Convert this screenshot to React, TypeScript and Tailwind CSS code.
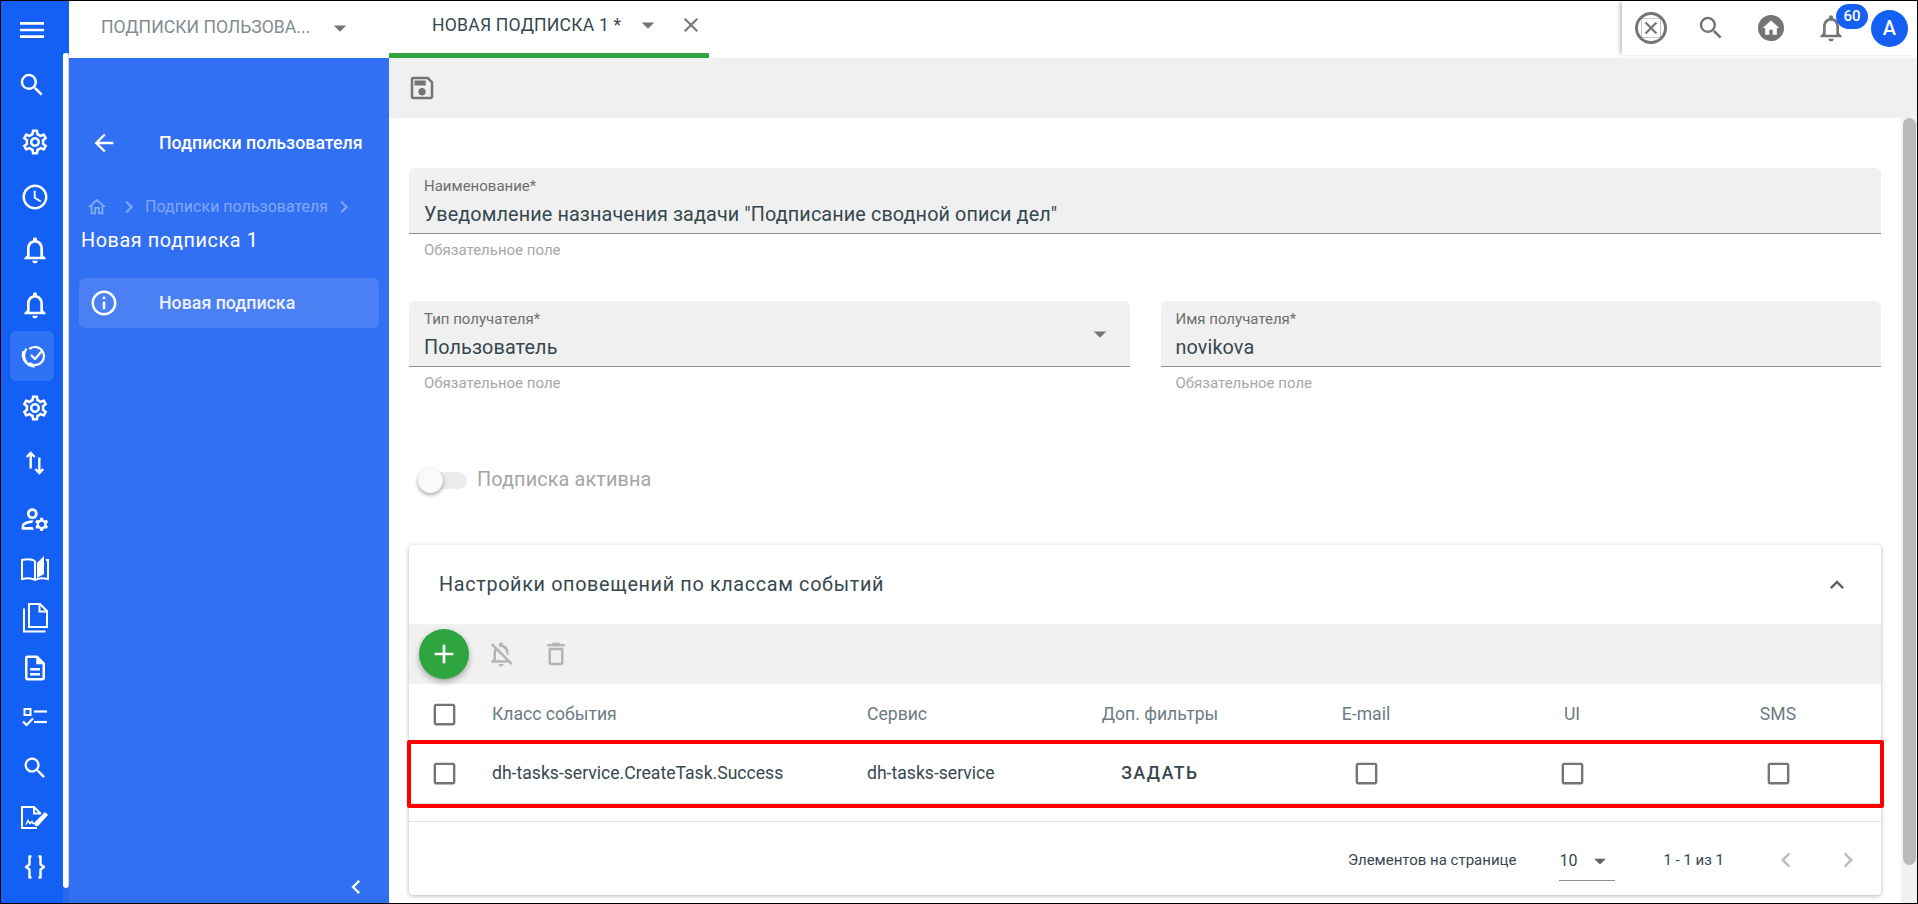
import React from "react";
import {
  MdMenu, MdSearch, MdOutlineSettings, MdAccessTime, MdNotificationsNone, MdOutlineManageAccounts,
  MdOutlineDescription, MdArrowBack, MdOutlineHome, MdChevronRight,
  MdOutlineInfo, MdChevronLeft, MdArrowDropDown, MdClose, MdOutlineSave, MdHome, MdOutlineNotificationsOff,
  MdOutlineDelete, MdAdd, MdExpandLess, MdCheckBoxOutlineBlank,
} from "react-icons/md";

function TargetIcon() {
  return (
    <svg width="30" height="30" viewBox="0 0 30 30" fill="none" stroke="white" strokeWidth="2.200" strokeLinecap="round" strokeLinejoin="round">
      <path d="M11 7.500a9 9 0 1 1 0 15" />
      <path d="M12.500 14.500l3.500 3.500 6.500-7.500" />
      <path d="M7 8.500a11 11 0 0 0 8 17" />
      <path d="M4 11a12 12 0 0 0 6 13" />
    </svg>
  );
}
function ArrowsIcon() {
  return (
    <svg width="24" height="24" viewBox="0 0 24 24" fill="none" stroke="white" strokeWidth="2.400">
      <path d="M7.700 17.500V2M3.700 6l4-4 4 4" />
      <path d="M16.300 6.500V22M12.300 18l4 4 4-4" />
    </svg>
  );
}
function ChecklistIcon() {
  return (
    <svg width="26" height="22" viewBox="0 0 26 22" fill="none" stroke="white" strokeWidth="2.200">
      <rect x="2.500" y="2" width="6" height="6" strokeWidth="2" />
      <path d="M12 4.500H25" />
      <path d="M1 14.500l3.500 3.500 6.500-6.500" />
      <path d="M12 15H25" />
    </svg>
  );
}
function CopyIcon() {
  return (
    <svg width="30" height="32" viewBox="0 0 30 32" fill="none" stroke="white" strokeWidth="2">
      <path d="M9 2h11l7 7v16H9z" />
      <path d="M19.500 2v7.500H27" />
      <path d="M4 6.500V29.500h21.500" />
    </svg>
  );
}
function BookIcon() {
  return (
    <svg width="30" height="28" viewBox="0 0 30 28" fill="none" stroke="white" strokeWidth="2">
      <path d="M15 7C12 5 6 5 2 6V25C6 24 12 24 15 26C18 24 24 24 28 25V6H26" />
      <path d="M15 7V26" />
      <path d="M17 9L24 2V20L17 24Z" fill="white" stroke="none" />
    </svg>
  );
}
function SignIcon() {
  return (
    <svg width="30" height="26" viewBox="0 0 30 26" fill="none" stroke="white" strokeWidth="2">
      <path d="M17 23H2V2h12l7 7" />
      <path d="M14 2v6.500h6" />
      <path d="M6 19.500l2-4 2 3 2-2 1 2h3" strokeWidth="1.500" />
      <path d="M15 21l-.5-3.500L25 7l3 3-10 11z" fill="white" stroke="none" />
    </svg>
  );
}
function BracesIcon() {
  return (
    <svg width="24" height="24" viewBox="0 0 24 24" fill="none" stroke="white" strokeWidth="2.400" strokeLinejoin="round">
      <path d="M8.500 1.500H6.500V9.500L3 12l3.500 2.500V22.500H8.500" />
      <path d="M15.500 1.500h2V9.500L21 12l-3.500 2.500V22.500h-2" />
    </svg>
  );
}

const RAIL = [
  { h: "h-[54px]", x: "", icon: <MdSearch size={30} color="white" /> },
  { h: "h-[60px]", x: "pl-[6px]", icon: <MdOutlineSettings size={30} color="white" /> },
  { h: "h-[50px]", x: "pl-[6px]", icon: <MdAccessTime size={30} color="white" /> },
  { h: "h-[56px]", x: "pl-[6px]", icon: <MdNotificationsNone size={32} color="white" /> },
  { h: "h-[54px]", x: "pl-[6px]", icon: <MdNotificationsNone size={32} color="white" /> },
  { h: "h-[48px]", x: "", active: true, icon: <TargetIcon /> },
  { h: "h-[55px]", x: "pl-[6px]", icon: <MdOutlineSettings size={30} color="white" /> },
  { h: "h-[55px]", x: "pl-[6px]", icon: <ArrowsIcon /> },
  { h: "h-[57px]", x: "pl-[6px]", icon: <MdOutlineManageAccounts size={32} color="white" /> },
  { h: "h-[42px]", x: "pl-[6px]", icon: <BookIcon /> },
  { h: "h-[58px]", x: "pl-[6px]", icon: <CopyIcon /> },
  { h: "h-[42px]", x: "pl-[6px]", icon: <MdOutlineDescription size={30} color="white" /> },
  { h: "h-[58px]", x: "pl-[6px]", icon: <ChecklistIcon /> },
  { h: "h-[42px]", x: "pl-[6px]", icon: <MdSearch size={28} color="white" /> },
  { h: "h-[58px]", x: "pl-[6px]", icon: <SignIcon /> },
  { h: "h-[40px]", x: "pl-[6px]", icon: <BracesIcon /> },
];

function Rail() {
  return (
    <div className="flex w-[68px] shrink-0 bg-[#1460f5]">
      <div className="w-[62px] shrink-0 flex flex-col">
        <div className="h-[57px] shrink-0 flex items-center justify-center">
          <MdMenu size={32} color="white" />
        </div>
        {RAIL.map((r, i) => (
          <div key={i} className={`${r.h} ${r.x} shrink-0 flex items-center justify-center`}>
            {r.active ? (
              <div className="w-[44px] h-[50px] shrink-0 rounded-md bg-[#2f72f6] flex items-center justify-center pl-[4px]">
                {r.icon}
              </div>
            ) : (
              r.icon
            )}
          </div>
        ))}
      </div>
      <div className="w-[6px] shrink-0 flex flex-col">
        <div className="h-[52px] shrink-0" />
        <div className="h-[835px] shrink-0 bg-white border-r border-[#d0d0d0] rounded-t-sm rounded-b-md" />
        <div className="flex-1 bg-[#2a68ea]" />
      </div>
    </div>
  );
}

function SidePanel() {
  return (
    <div className="w-[320px] shrink-0 bg-[#3270f3] flex flex-col text-white relative">
      <div className="h-[73px] shrink-0" />
      <div className="h-[24px] flex items-center shrink-0">
        <div className="w-[90px] pl-[21px] shrink-0"><MdArrowBack size={28} color="white" /></div>
        <span className="text-[17.800px] font-medium leading-none">Подписки пользователя</span>
      </div>
      <div className="mt-[40px] h-[24px] flex items-center shrink-0 pl-[16px] text-[16px] text-white/40">
        <MdOutlineHome size={22} className="ml-[1px]" />
        <MdChevronRight size={24} className="ml-[9px]" />
        <span className="ml-[4px]">Подписки пользователя</span>
        <MdChevronRight size={24} className="ml-[4px]" />
      </div>
      <div className="mt-[10px] pl-[12px] text-[19.800px] leading-[24px] tracking-[0.6px]">Новая подписка 1</div>
      <div className="mt-[25px] mx-[10px] h-[50px] rounded-md bg-[#4b80f5] flex items-center">
        <MdOutlineInfo size={30} className="ml-[10px]" />
        <span className="ml-[40px] text-[17.800px] font-medium text-white/90">Новая подписка</span>
      </div>
      <div className="mt-auto mb-[2px] pr-[19px] flex justify-end"><MdChevronLeft size={28} /></div>
    </div>
  );
}

function TopBar() {
  return (
    <div className="h-[57px] shrink-0 bg-white flex items-stretch">
      <div className="w-[320px] shrink-0 flex items-center pl-[32px] pb-[4px]">
        <span className="text-[17.6px] text-[#828c92] whitespace-nowrap">ПОДПИСКИ ПОЛЬЗОВА...</span>
        <MdArrowDropDown size={30} color="#757575" className="ml-[15px]" />
      </div>
      <div className="w-[320px] shrink-0 flex items-center pl-[43px] pb-[4px] border-b-[5px] border-[#2ea53f]">
        <span className="text-[17.6px] tracking-[0.2px] text-[#37474f] whitespace-nowrap">НОВАЯ ПОДПИСКА 1 *</span>
        <MdArrowDropDown size={30} color="#757575" className="ml-[12px]" />
        <MdClose size={24} color="#757575" className="ml-[16px]" />
      </div>
      <div className="flex-1" />
      <div className="w-[295px] shrink-0 flex items-center relative shadow-[-3px_0_4px_-1px_rgba(0,0,0,0.25)] mb-[3px]">
        <div className="ml-[13px] w-[32px] h-[32px] rounded-full border-[3px] border-[#757575] flex items-center justify-center">
          <MdClose size={20} color="#757575" className="stroke-[#757575] stroke-1" />
        </div>
        <MdSearch size={30} color="#757575" className="ml-[29px]" />
        <div className="ml-[32px] w-[26px] h-[26px] rounded-full bg-[#757575] flex items-center justify-center">
          <MdHome size={20} color="white" />
        </div>
        <MdNotificationsNone size={32} color="#757575" className="ml-[31px]" />
        <div className="absolute left-[214px] top-[3px] w-[32px] h-[25px] rounded-full bg-[#1460f5] text-white text-[15px] font-medium flex items-center justify-center">60</div>
        <div className="ml-[24px] w-[37px] h-[37px] rounded-full bg-[#1460f5] text-white text-[20px] font-medium flex items-center justify-center">A</div>
      </div>
    </div>
  );
}

function Field({ label, value, helper, arrow }: { label: string; value: string; helper: string; arrow?: boolean }) {
  return (
    <div className="flex-1 min-w-0">
      <div className="h-[66px] bg-[#f0f0f0] rounded-t-md border-b border-[#8e8e8e] px-[15px] pt-[9px] relative">
        <div className="text-[15px] leading-[18px] text-[#6e6e6e]">{label}</div>
        <div className="mt-[7px] text-[19.800px] leading-[26px] tracking-[0.12px] text-[#37474f]">{value}</div>
        {arrow && <MdArrowDropDown size={30} color="#757575" className="absolute right-[15px] top-[18px]" />}
      </div>
      <div className="mt-[7px] pl-[15px] text-[15px] leading-[18px] text-[#a4a8aa]">{helper}</div>
    </div>
  );
}

const GRID = "grid grid-cols-[83px_375px_190px_206px_206px_206px_206px] items-center";

function Check() {
  return <MdCheckBoxOutlineBlank size={29} color="#757575" />;
}

function Card() {
  return (
    <div className="mt-[52px] h-[350px] shrink-0 bg-white rounded shadow-[0_1px_4px_rgba(0,0,0,0.3)] flex flex-col relative">
      <div className="h-[79px] shrink-0 flex items-center pl-[30px] pr-[30px]">
        <span className="text-[19.800px] tracking-[0.66px] text-[#37474f]">Настройки оповещений по классам событий</span>
        <MdExpandLess size={28} color="#616161" className="ml-auto" />
      </div>
      <div className="h-[60px] shrink-0 bg-[#f1f1f1] flex items-center pl-[10px]">
        <div className="w-[50px] h-[50px] rounded-full bg-[#2ea53f] shadow-[0_3px_6px_rgba(0,0,0,0.3)] flex items-center justify-center">
          <MdAdd size={32} color="white" />
        </div>
        <MdOutlineNotificationsOff size={30} color="#b5b5b5" className="ml-[17px]" />
        <MdOutlineDelete size={30} color="#b5b5b5" className="ml-[25px]" />
      </div>
      <div className={`${GRID} h-[60px] shrink-0 text-[17.6px] text-[#6d7b83]`}>
        <div className="flex justify-center pr-[13px]"><Check /></div>
        <div>Класс события</div>
        <div>Сервис</div>
        <div className="text-center">Доп. фильтры</div>
        <div className="text-center">E-mail</div>
        <div className="text-center">UI</div>
        <div className="text-center">SMS</div>
      </div>
      <div className={`${GRID} h-[60px] shrink-0 text-[17.6px] text-[#37474f] border-b border-[#e2e2e2]`}>
        <div className="flex justify-center pr-[13px]"><Check /></div>
        <div>dh-tasks-service.CreateTask.Success</div>
        <div>dh-tasks-service</div>
        <div className="text-center font-medium tracking-[1.5px]">ЗАДАТЬ</div>
        <div className="flex justify-center"><Check /></div>
        <div className="flex justify-center"><Check /></div>
        <div className="flex justify-center"><Check /></div>
      </div>
      <div className="mt-[17px] pt-[3px] border-t border-[#e2e2e2] flex-1 flex items-center text-[15px] text-[#37474f]">
        <span className="ml-[939px]">Элементов на странице</span>
        <div className="ml-[43px] w-[56px] h-[40px] border-b border-[#8e8e8e] flex items-center text-[#37474f] relative top-[1px]">
          <span className="text-[16px]">10</span>
          <MdArrowDropDown size={28} color="#616161" className="ml-[9px]" />
        </div>
        <span className="ml-[48px]">1 - 1 из 1</span>
        <MdChevronLeft size={30} color="#bdbdbd" className="ml-[47px]" />
        <MdChevronRight size={30} color="#bdbdbd" className="ml-[32px]" />
      </div>
      <div className="absolute left-[-2px] top-[195px] right-[-3px] h-[68px] border-[4px] border-[#ff0000] rounded-[2px] pointer-events-none" />
    </div>
  );
}

function Main() {
  return (
    <div className="flex-1 min-w-0 flex flex-col overflow-hidden">
      <div className="h-[60px] shrink-0 bg-[#f0f0f0] flex items-center pl-[18px]">
        <MdOutlineSave size={30} color="#757575" />
      </div>
      <div className="flex-1 flex min-h-0">
        <div className="flex-1 min-w-0 pl-[20px] pr-[20px] flex flex-col">
          <div className="mt-[50px] flex">
            <Field label="Наименование*" value={'Уведомление назначения задачи "Подписание сводной описи дел"'} helper="Обязательное поле" />
          </div>
          <div className="mt-[42px] flex gap-[31px]">
            <Field label="Тип получателя*" value="Пользователь" helper="Обязательное поле" arrow />
            <Field label="Имя получателя*" value="novikova" helper="Обязательное поле" />
          </div>
          <div className="mt-[75px] h-[26px] flex items-center pl-[9px]">
            <div className="w-[49px] h-[17px] rounded-full bg-[#ececec] relative">
              <div className="absolute left-0 top-[-4px] w-[25px] h-[25px] rounded-full bg-[#fafafa] shadow-[0_2px_4px_rgba(0,0,0,0.35)]" />
            </div>
            <span className="ml-[10px] text-[19.800px] tracking-[0.15px] text-[#a5a5a5]">Подписка активна</span>
          </div>
          <Card />
        </div>
        <div className="w-[16px] shrink-0 bg-[#f1f1f1] pl-[2px] pr-[1px]">
          <div className="h-[747px] rounded-full bg-[#b9b9b9]" />
        </div>
      </div>
    </div>
  );
}

export default function App() {
  return (
    <div className="w-[1918px] h-[904px] border border-black flex overflow-hidden bg-white font-[Roboto,sans-serif]">
      <Rail />
      <div className="flex-1 min-w-0 flex flex-col">
        <TopBar />
        <div className="flex-1 flex min-h-0">
          <SidePanel />
          <Main />
        </div>
      </div>
    </div>
  );
}
